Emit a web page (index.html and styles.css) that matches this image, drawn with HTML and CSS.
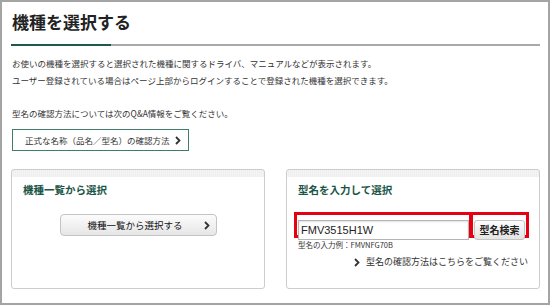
FILE: index.html
```html
<!DOCTYPE html>
<html lang="ja">
<head>
  <meta charset="UTF-8" />
  <meta name="viewport" content="width=device-width, initial-scale=1.0"/>
  <title>機種を選択する</title>
  <link rel="stylesheet" href="styles.css">
</head>
<body>
  <div class="page">
    <h1>機種を選択する</h1>
    <div class="rule"></div>

    <p class="lead">お使いの機種を選択すると選択された機種に関するドライバ、マニュアルなどが表示されます。<br>ユーザー登録されている場合はページ上部からログインすることで登録された機種を選択できます。</p>
    <p class="note">型名の確認方法については次のQ&amp;A情報をご覧ください。</p>

    <a class="link-btn" href="#">正式な名称（品名／型名）の確認方法
      <svg class="chev" width="6" height="9" viewBox="0 0 6 9"><polyline points="1,1 4.5,4.5 1,8" /></svg>
    </a>

    <div class="cards">
      <section class="card">
        <h2>機種一覧から選択</h2>
        <button class="gbtn" type="button">
          <span>機種一覧から選択する</span>
          <svg class="chev" width="6" height="9" viewBox="0 0 6 9"><polyline points="1,1 4.5,4.5 1,8" /></svg>
        </button>
      </section>

      <section class="card">
        <h2>型名を入力して選択</h2>
        <form class="search">
          <div class="field"><input type="text" value="FMV3515H1W" /></div>
          <div class="action"><button type="submit">型名検索</button></div>
        </form>
        <p class="example">型名の入力例：FMVNFG70B</p>
        <p class="more">
          <svg class="chev" width="6" height="9" viewBox="0 0 6 9"><polyline points="1,1 4.5,4.5 1,8" /></svg>
          型名の確認方法はこちらをご覧ください
        </p>
      </section>
    </div>
  </div>
</body>
</html>
```

FILE: styles.css
```css
* {box-sizing: border-box;}
body {margin: 0; font-family: "Noto Sans CJK JP", "Noto Sans", sans-serif; color: #333; background: #fff;}
.page {width: 550px; height: 305px; border: 2px solid #a4a4a4; padding: 8px 8px 0 9px; overflow: hidden;}

h1 {margin: 0 0 0 1px; font-size: 17px; line-height: 24px; color: #222; font-weight: bold;}
.rule {height: 2px; margin-top: 10px; background: linear-gradient(to right, #1d5a4b 100px, #a9a9a9 100px);}

.lead {margin: 9px 0 0 1px; font-size: 8.5px; line-height: 17px;}
.note {margin: 16px 0 0 1px; font-size: 8.5px; line-height: 17px;}

.link-btn {display: flex; align-items: center; justify-content: space-between; width: 177px; height: 22px; margin: 7px 0 0 1px; padding: 0 7px 0 12px; border: 1px solid #3f7c6c; color: #333; font-size: 8.5px; text-decoration: none;}

.chev {flex: none;}
.chev polyline {fill: none; stroke: #333; stroke-width: 1.8;}

.cards {display: grid; grid-template-columns: 254px 254px; gap: 21px; margin-top: 18px;}
.card {height: 120px; padding: 0 11px; border: 1px solid #cdcdcd; border-radius: 3px; background: repeating-linear-gradient(to right, #f5f5f5 0 1px, #eeeeee 1px 2px) top / 100% 7px no-repeat, #fff;}
.card h2 {margin: 12px 0 0; font-size: 10.5px; line-height: 16px; color: #1b5546; font-weight: bold;}

.gbtn {display: flex; align-items: center; justify-content: space-between; width: 157px; height: 22px; margin: 16px auto 0; padding: 0 6px 0 27px; border: 1px solid #c4c4c4; border-radius: 4px; background: linear-gradient(#fcfcfc, #e6e6e6); font-family: inherit; font-size: 9.5px; color: #111; cursor: pointer;}

.search {display: flex; width: 235px; height: 26px; margin: 14px 0 0 -4px; border: 3px solid #e50012;}
.field {flex: 1; padding: 0 0 0 1px; border-right: 4px solid #e50012;}
.field input {width: 100%; height: 20px; padding: 0 0 0 2px; border: 1px solid #b5b5b5; box-shadow: inset 0 1px 2px rgba(0,0,0,0.12); font-family: "Liberation Sans", Arial, sans-serif; font-size: 11px; color: #222; outline: none;}
.action {width: 53px; padding: 0 1px;}
.action button {width: 100%; height: 20px; padding: 0; border: 1px solid #c4c4c4; border-radius: 3px; background: linear-gradient(#fcfcfc, #e4e4e4); font-family: inherit; font-size: 10px; font-weight: bold; color: #222; cursor: pointer;}

.example {margin: 1px 0 0; font-size: 7.5px; line-height: 12px;}
.more {display: flex; align-items: center; justify-content: flex-end; gap: 6px; margin: 4px 0 0; font-size: 9px; line-height: 14px;}
```
